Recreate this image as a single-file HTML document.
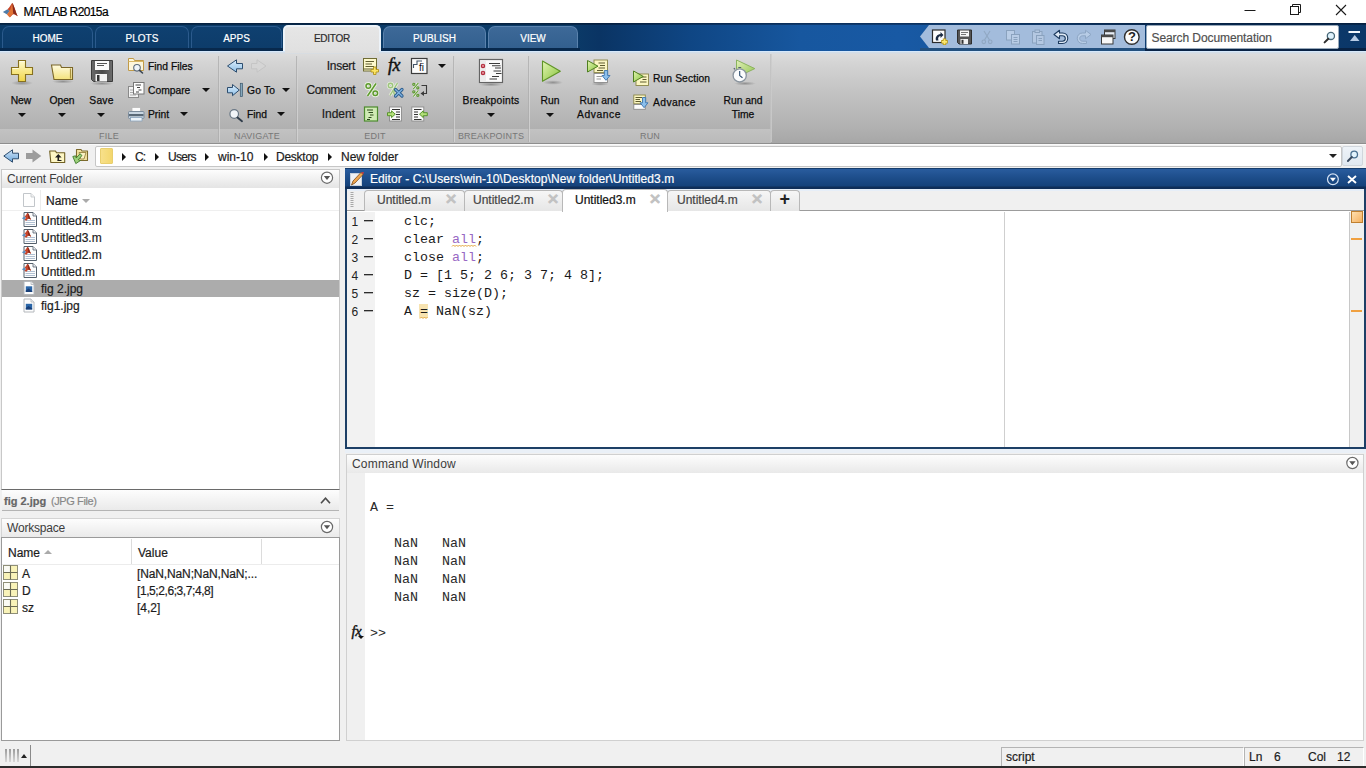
<!DOCTYPE html>
<html lang="en">
<head>
<meta charset="utf-8">
<title>MATLAB R2015a</title>
<style>
*{box-sizing:border-box;margin:0;padding:0}
html,body{width:1366px;height:768px;overflow:hidden;background:#f0f0f0;font-family:"Liberation Sans",sans-serif;color:#1a1a1a}
.abs,.abs *{position:absolute}
#app{position:relative;width:1366px;height:768px;overflow:hidden}
#app div,#app span,#app svg{position:absolute;white-space:nowrap}
.ui{font-size:12px;line-height:16px;color:#1c1c1c;-webkit-text-stroke:.2px}
.rb{font-size:10.3px;line-height:14px;color:#0c0c0c;-webkit-text-stroke:.25px #0c0c0c}
#app .mono{font-family:"Liberation Mono",monospace;font-size:13.333px;line-height:18px;white-space:pre;color:#1a1a1a}
.sec{font-size:9px;line-height:10px;color:#777;letter-spacing:.2px}
.tabt{font-size:11px;line-height:14px;color:#fff;text-align:center;-webkit-text-stroke:.2px #fff}
.tb{height:22px;background:linear-gradient(180deg,#0f4070,#0d3c6a);border:1px solid #2b5a8c;border-bottom:none;border-radius:7px 7px 0 0}
.tb.lt{background:linear-gradient(180deg,#3d6998,#33608f);border-color:#5a82ad}
.tb.act{background:linear-gradient(180deg,#e6e6e6,#e0e0e0);border:2px solid #edf3f9;border-bottom:none;border-radius:5px 5px 0 0}
#app .tb .tabt{left:0;right:0;top:5px;font-size:10px}
.c{text-align:center}.r{text-align:right}
.vsep{top:56px;width:2px;height:86px;background:linear-gradient(90deg,#acacac 0,#acacac 50%,#d6d6d6 50%,#d6d6d6 100%);opacity:.75}
.rtri{width:0;height:0;border-top:4px solid transparent;border-bottom:4px solid transparent;border-left:4px solid #111}
.utri{width:0;height:0;border-left:4px solid transparent;border-right:4px solid transparent;border-bottom:4px solid #aaa}
.etab{top:190px;height:21px;background:linear-gradient(180deg,#f6f6f6,#e6e6e6);border:1px solid #b8b8b8;border-bottom:none;border-radius:4px 4px 0 0}
.etab.on{top:189px;height:23px;background:#fff}
.x{top:189px;font-size:19px;line-height:20px;color:#c2c2c2;-webkit-text-stroke:1.1px #c2c2c2}
.dash{left:364px;width:9px;height:2px;background:linear-gradient(180deg,#2c2c2c 0,#2c2c2c 50%,#b0b0b0 50%,#b0b0b0 100%)}
.s{color:#9868c4}
.tri{width:0;height:0;border-left:4px solid transparent;border-right:4px solid transparent;border-top:4px solid #111}
</style>
</head>
<body>
<div id="app">

<!-- ===== TITLE BAR ===== -->
<div id="titlebar" style="left:0;top:0;width:1366px;height:23px;background:#fff"></div>
<span class="ui" style="left:23.500px;top:4px;color:#000;letter-spacing:-.62px">MATLAB R2015a</span>
<svg style="left:1.500px;top:.7px" width="17" height="19.200" viewBox="0 0 20 20" preserveAspectRatio="none">
 <path d="M1 11.5 L6.5 8.5 L9 10.5 L6 14 Z" fill="#4f7ca8"/>
 <path d="M6.5 8.5 C9 7 10.5 3 12 2 C13.5 2.5 15.5 10 18.5 16 C15.5 14 13.5 12.8 12 14.5 C10.5 16 9.5 17 9 17 L6 14 L9 10.5 Z" fill="#c8472a"/>
 <path d="M12 2 C13.5 2.5 15.5 10 18.5 16 C16 14 14.5 13 13.2 13.4 C12.8 9 12.5 5 12 2 Z" fill="#8a2a1a"/>
 <path d="M9 10.5 C10.5 8 11.2 4 12 2 C12.4 6 12.8 10 13.2 13.4 C12.2 13.8 11 15.5 9 17 L6 14 Z" fill="#e8813a" opacity=".75"/>
</svg>
<!-- window controls -->
<svg style="left:1240px;top:0" width="120" height="22" viewBox="1240 0 120 22" fill="none" stroke="#1a1a1a" stroke-width="1">
<path d="M1244.500 10.500 H1255.500"/>
<rect x="1290.500" y="6.500" width="8" height="8"/><path d="M1292.500 6.500 V4.500 H1300.500 V12.500 H1298.500"/>
<path d="M1336 5 L1346 15 M1346 5 L1336 15" stroke-width="1.100"/>
</svg>

<!-- ===== TAB STRIP ===== -->
<div id="tabstrip" style="left:0;top:23px;width:1366px;height:28px;background:linear-gradient(90deg,#0b3b68 0,#0b3b68 570px,#0a3464 600px,#0f4684 690px,#17579f 800px,#1859a4 900px,#175496 1050px,#0d3c70 1150px,#0b3768 1366px)"></div>

<div style="left:0;top:23px;width:1366px;height:2px;background:linear-gradient(180deg,rgba(0,8,24,.55),rgba(0,8,24,.3))"></div><div style="left:0;top:48px;width:580px;height:3px;background:rgba(6,24,50,.5)"></div><div style="left:1145px;top:48px;width:221px;height:3px;background:rgba(6,20,44,.6)"></div><div style="left:920px;top:48px;width:225px;height:3px;background:#23507e"></div>
<div class="tb" style="left:2px;top:26px;width:91px"><span class="tabt">HOME</span></div>
<div class="tb" style="left:95px;top:26px;width:94px"><span class="tabt">PLOTS</span></div>
<div class="tb" style="left:191px;top:26px;width:91px"><span class="tabt">APPS</span></div>
<div class="tb lt" style="left:383px;top:26px;width:103px"><span class="tabt">PUBLISH</span></div>
<div class="tb lt" style="left:488px;top:26px;width:90px"><span class="tabt">VIEW</span></div>
<div class="tb act" style="left:283px;top:25px;width:98px;height:27px"><span class="tabt" style="color:#2c2c2c;top:5px;letter-spacing:-.25px;-webkit-text-stroke:.2px #2c2c2c">EDITOR</span></div>
<!-- quick access -->
<div id="qa" style="left:920px;top:25px;width:225px;height:23px;background:#a3bcdc;clip-path:polygon(9px 0,100% 0,100% 100%,9px 100%,0 50%)"></div>
<div id="search" style="left:1146px;top:25px;width:193px;height:24px;background:#fff;border:1px solid #9ab;border-radius:2px"></div>
<span class="ui" style="left:1151.500px;top:30px;color:#505050;letter-spacing:-.08px">Search Documentation</span>

<svg style="left:920px;top:23px" width="446" height="28" viewBox="920 23 446 28">
<!-- new shortcut -->
<rect x="932.500" y="30" width="12.500" height="12.500" fill="#fdfdfd" stroke="#2a2a2a" stroke-width="1.200"/>
<path d="M936 40.500 C935 37 937 34.500 940.500 34 V32 L943.500 35 L940.500 38 V36 C938.500 36.300 937.500 38 938.500 40.500 Z" fill="#1c2c44"/>
<path d="M944.500 38.500 V45 M941.200 41.800 H947.800" stroke="#b89a1c" stroke-width="3.400"/><path d="M944.500 39.300 V44.200 M942 41.800 H947" stroke="#fbe870" stroke-width="1.800"/>
<!-- save -->
<path d="M957.500 30 H971.500 V44 H959 L957.500 42.500 Z" fill="#555" stroke="#2e2e2e" stroke-width="1"/>
<rect x="960" y="30.500" width="9" height="6" fill="#f6f6f6"/><path d="M961 32.500 H968 M961 34.500 H966" stroke="#666" stroke-width=".9"/>
<rect x="960.500" y="39" width="7.500" height="5" fill="#f0f0f0"/><rect x="961.500" y="39.800" width="2" height="4" fill="#333"/>
<!-- cut (disabled) -->
<g stroke="#8fa6c0" fill="none" stroke-width="1.100" opacity=".9"><path d="M984 31 L989.500 40 M990 31 L984.500 40"/><circle cx="983.800" cy="41.800" r="1.800"/><circle cx="990.200" cy="41.800" r="1.800"/></g>
<!-- copy (disabled) -->
<g stroke="#8aa2be" fill="#b9cde6" stroke-width="1"><rect x="1006.500" y="30.500" width="8" height="9.500"/><rect x="1011.500" y="34.500" width="8" height="9.500"/><path d="M1013.500 37.500 H1017.500 M1013.500 39.500 H1017.500 M1013.500 41.500 H1017.500" fill="none"/></g>
<!-- paste (disabled) -->
<g stroke="#8aa2be" fill="#b4c8e2" stroke-width="1"><rect x="1032.500" y="31.500" width="9.500" height="11.500"/><rect x="1035" y="30" width="4.500" height="2.500"/><rect x="1036.500" y="35.500" width="7.500" height="9"/><path d="M1038.500 38.500 H1042 M1038.500 40.500 H1042" fill="none"/></g>
<!-- undo -->
<path d="M1054 34.500 L1059.500 30.300 V33 H1062.500 C1069.500 33 1069.500 43.500 1062.500 43.500 H1058.500 V41.200 H1062.300 C1066.300 41.200 1066.300 35.800 1062.300 35.800 H1059.500 V38.700 Z" fill="#dfeaf6" stroke="#1c3a5e" stroke-width="1.100" stroke-linejoin="round"/>
<!-- redo (disabled) -->
<path d="M1091 34.500 L1085.500 30.300 V33 H1082.500 C1075.500 33 1075.500 43.500 1082.500 43.500 H1086.500 V41.200 H1082.700 C1078.700 41.200 1078.700 35.800 1082.700 35.800 H1085.500 V38.700 Z" fill="#b7cce6" stroke="#8da6c4" stroke-width="1" stroke-linejoin="round"/>
<!-- windows -->
<rect x="1104.500" y="30" width="10.500" height="8.500" fill="#e8eef6" stroke="#3a3a3a" stroke-width="1"/><rect x="1104.500" y="30" width="10.500" height="2.200" fill="#4a4a4a"/>
<rect x="1101.500" y="35" width="11.500" height="9" fill="#f8f8f8" stroke="#3a3a3a" stroke-width="1"/><rect x="1101.500" y="35" width="11.500" height="2.200" fill="#4a4a4a"/>
<!-- help -->
<circle cx="1131.800" cy="37" r="7.300" fill="#fbfbfb" stroke="#2e2e2e" stroke-width="1.400"/>
<!-- search magnifier -->
<circle cx="1330.900" cy="35.900" r="3.600" fill="#dff2fc" stroke="#486878" stroke-width="1.300"/>
<path d="M1328.300 38.700 L1324.600 42.400" stroke="#2e2e2e" stroke-width="2" stroke-linecap="round"/>
<!-- collapse -->
<rect x="1348.500" y="31" width="11.500" height="2" fill="#f4f8fc"/>
<path d="M1350 41 L1354.700 35 L1359.500 41 Z" fill="#b7cbe4"/>
</svg>
<span style="left:1128px;top:30px;font-size:13px;line-height:14px;font-weight:bold;color:#1e1e1e">?</span>
<!-- ===== RIBBON ===== -->
<div id="ribbon" style="left:0;top:51px;width:1366px;height:93px;background:linear-gradient(180deg,#d6e8fa 0,#d6e8fa 1px,#d3dde7 1px,#d3dde7 2px,#dcdcdc 3px,#d4d4d4 12px,#c0c0c0 46px,#b0b0b0 78px,#a7a7a7 92px,#8e8e8e 92px)"></div>

<div style="left:285px;top:51px;width:94px;height:2px;background:#dfdfdf"></div>
<div style="left:0;top:129px;width:771px;height:14px;background:linear-gradient(180deg,#c2c2c2,#bababa)"></div>

<div class="vsep" style="left:218px"></div><div class="vsep" style="left:296px"></div><div class="vsep" style="left:453px"></div><div class="vsep" style="left:528px"></div><div class="vsep" style="left:770px;top:54px;height:88px;background:linear-gradient(90deg,#bcbcbc,#d0d0d0);opacity:.8"></div>
<svg id="ribicons" style="left:0;top:51px" width="772" height="93" viewBox="0 51 772 93">
<defs>
<linearGradient id="gy" x1="0" y1="0" x2="0" y2="1"><stop offset="0" stop-color="#fffbd0"/><stop offset="1" stop-color="#f1d545"/></linearGradient>
<linearGradient id="gf" x1="0" y1="0" x2="0" y2="1"><stop offset="0" stop-color="#fffbe0"/><stop offset="1" stop-color="#f3e27c"/></linearGradient>
<linearGradient id="gg" x1="0" y1="0" x2="1" y2="1"><stop offset="0" stop-color="#e4f5b4"/><stop offset="1" stop-color="#86c33a"/></linearGradient>
<linearGradient id="gb" x1="0" y1="0" x2="0" y2="1"><stop offset="0" stop-color="#dceefc"/><stop offset="1" stop-color="#8fc0e8"/></linearGradient>
<linearGradient id="gd" x1="0" y1="0" x2="1" y2="0"><stop offset="0" stop-color="#6a6a6a"/><stop offset=".5" stop-color="#4a4a4a"/><stop offset="1" stop-color="#6e6e6e"/></linearGradient>
<radialGradient id="gsh"><stop offset="0" stop-color="#000" stop-opacity=".28"/><stop offset="1" stop-color="#000" stop-opacity="0"/></radialGradient>
</defs>
<!-- New -->
<ellipse cx="22" cy="83" rx="11" ry="2.5" fill="url(#gsh)"/>
<path d="M18.5 60.5 H25.5 V67.5 H32.5 V74.5 H25.5 V81.5 H18.5 V74.5 H11.5 V67.5 H18.5 Z" fill="url(#gy)" stroke="#86701f" stroke-width="1.100"/>
<path d="M19.5 61.5 H24.5 M12.5 68.5 H18.5" stroke="#fffef0" stroke-width="1" opacity=".8"/>
<!-- Open -->
<ellipse cx="63" cy="81.5" rx="11" ry="2" fill="url(#gsh)"/>
<path d="M51.5 65 H60.5 L61.5 67.5 H72.5 V79.5 H54 Z" fill="url(#gf)" stroke="#7a6628" stroke-width="1.100"/>
<path d="M70.5 68.5 V78.5" stroke="#a8913e" stroke-width="1.2"/>
<!-- Save -->
<ellipse cx="102" cy="83.5" rx="12" ry="2" fill="url(#gsh)"/>
<path d="M91.5 60.5 H112.5 V81.5 H93.5 L91.5 79.5 Z" fill="url(#gd)" stroke="#3c3c3c" stroke-width="1"/>
<rect x="95" y="61" width="14" height="9" fill="#fbfbfb"/>
<path d="M97 63.5 H107 M97 65.5 H104" stroke="#555" stroke-width="1"/>
<rect x="95.500" y="74" width="11.500" height="7.500" fill="#f4f4f4"/>
<rect x="97" y="75" width="2.500" height="6" fill="#333"/>
<!-- Find files -->
<path d="M128.500 58.500 H133.500 L134.500 60.500 H143.500 V70.500 H128.500 Z" fill="#fdf6dc" stroke="#c09a48" stroke-width="1"/>
<path d="M128.500 61.500 H143.500" stroke="#d8b866" stroke-width="1"/>
<circle cx="137" cy="67.800" r="3.300" fill="#eef4fa" stroke="#5c6b7c" stroke-width="1.100"/>
<path d="M139.500 70.300 L142.500 73" stroke="#3a4654" stroke-width="1.600" stroke-linecap="round"/>
<!-- Compare -->
<rect x="128.500" y="86.500" width="10" height="11" fill="#f2f2f2" stroke="#8a8a8a"/>
<path d="M130 90 H133 M130 92.500 H133 M130 95 H136" stroke="#aaa" stroke-width="1"/>
<rect x="133.500" y="82.500" width="10.500" height="11.500" fill="#fdfdfd" stroke="#777"/>
<path d="M135.500 85 H141 M137 87.500 H140 M138.500 90 H141.500 M136 92 H139" stroke="#444" stroke-width="1"/>
<!-- Print -->
<rect x="132" y="107.500" width="8.500" height="5" fill="#fcfcfc" stroke="#b8b8b8" stroke-width=".8"/>
<rect x="128.500" y="111.500" width="15.500" height="7" rx="1" fill="#c9d6e2" stroke="#7c8c9c"/>
<rect x="129" y="114" width="14.500" height="2.200" fill="#5b6a78"/>
<rect x="130.500" y="117.500" width="11.500" height="3.500" fill="#eef5fb" stroke="#8aa4bc" stroke-width=".8"/>
<!-- Back / Forward -->
<path d="M227.500 66 L236.500 59.800 V63.500 H242.500 V68.800 H236.500 V72.200 Z" fill="url(#gb)" stroke="#2d4d6e" stroke-width="1" stroke-linejoin="round"/>
<path d="M266 66 L257 59.800 V63.500 H251.500 V68.800 H257 V72.200 Z" fill="#d6d6d6" stroke="#c2c2c2" stroke-width="1" stroke-linejoin="round" opacity=".8"/>
<!-- Go To -->
<path d="M239.300 90 L232.500 84.500 V87.500 H227.500 V92.800 H232.500 V95.700 Z" fill="url(#gb)" stroke="#2d4d6e" stroke-width="1" stroke-linejoin="round"/>
<rect x="240.300" y="83.300" width="2.200" height="13.200" fill="#86a8bd" stroke="#3a566c" stroke-width=".7"/>
<!-- Find -->
<circle cx="234.200" cy="114" r="4.300" fill="#f2f5f8" stroke="#6a7886" stroke-width="1.200"/>
<path d="M237.500 117.500 L242 121.200" stroke="#2f3c4a" stroke-width="1.900" stroke-linecap="round"/>
<!-- Insert section -->
<rect x="363.500" y="58.500" width="13" height="12.500" fill="#fdf9cc" stroke="#6f6c34"/>
<path d="M365.500 61.500 H374 M365.500 64 H372 M365.500 66.500 H374 M363.500 69 H377" stroke="#5e5b2e" stroke-width="1"/>
<path d="M373.500 67 H376 V69.500 H378.500 V72 H376 V74.500 H373.500 V72 H371 V69.500 H373.500 Z" fill="#fbe566" stroke="#b2941c" stroke-width=".9"/>
<!-- fi icon -->
<rect x="411.500" y="58.500" width="15.500" height="15" fill="#fcfcfc" stroke="#3c3c3c" stroke-width="1.200"/>
<path d="M413.500 68 V64.500 H417 V61 H422" fill="none" stroke="#44566a" stroke-width="1.100"/>
<!-- % comment -->
<g fill="none" stroke="#f2fae8" stroke-width="3.200" opacity=".85"><circle cx="368.300" cy="86" r="2.300"/><circle cx="375.300" cy="93.300" r="2.300"/><path d="M376 83.500 L367.500 96"/></g>
<g fill="none" stroke="#5c9a2c" stroke-width="1.500"><circle cx="368.300" cy="86" r="2.300"/><circle cx="375.300" cy="93.300" r="2.300"/><path d="M376 83.500 L367.500 96"/></g>
<!-- % uncomment -->
<g fill="none" stroke="#eef7e2" stroke-width="3" opacity=".8"><circle cx="390.500" cy="85.500" r="2.200"/><circle cx="396" cy="92.500" r="2.200"/><path d="M397.500 83 L390 95.500"/></g>
<g fill="none" stroke="#9cc47c" stroke-width="1.400"><circle cx="390.500" cy="85.500" r="2.200"/><circle cx="396" cy="92.500" r="2.200"/><path d="M397.500 83 L390 95.500"/></g>
<path d="M395.500 89.500 L402 96 M402 89.500 L395.500 96" stroke="#2c5c8c" stroke-width="3.200" stroke-linecap="round"/>
<path d="M395.500 89.500 L402 96 M402 89.500 L395.500 96" stroke="#7fb2e0" stroke-width="1.400" stroke-linecap="round"/>
<!-- %% wrap -->
<g fill="none" stroke="#eef7e2" stroke-width="2.600" opacity=".8"><path d="M418 83 L413.500 89 M418 90.500 L413.500 96.500"/></g>
<g fill="none" stroke="#5c9a2c" stroke-width="1.100"><circle cx="413.800" cy="84.300" r="1.100"/><circle cx="417.800" cy="87.800" r="1.100"/><path d="M418.300 83 L413.300 89"/><circle cx="413.800" cy="91.800" r="1.100"/><circle cx="417.800" cy="95.300" r="1.100"/><path d="M418.300 90.500 L413.300 96.500"/></g>
<path d="M421.500 85.500 H426.500 V93.500 H422" fill="none" stroke="#3a3a3a" stroke-width="1.100"/>
<path d="M420.500 93.500 L424 91 V96 Z" fill="#3a3a3a"/>
<!-- smart indent -->
<rect x="364.500" y="107" width="13" height="14" fill="#cfeab4" stroke="#4c8a2e" stroke-width="1.200"/>
<path d="M367 110 H373 M368.500 112.500 H373 M370 115 H373.500 M368.500 117.500 H371.500 M367 119.500 H370" stroke="#2c4a1c" stroke-width="1"/>
<!-- indent more -->
<rect x="389.500" y="107" width="12" height="14" fill="#fafafa" stroke="#8c8c8c" stroke-width=".9"/>
<path d="M392 109.500 H400 M396 112 H400 M396 114.500 H400 M396 117 H400 M392 119.500 H400" stroke="#333" stroke-width="1.100"/>
<path d="M387.500 112.700 H391.500 V110.800 L395.300 114.200 L391.500 117.600 V115.700 H387.500 Z" fill="#b4e07a" stroke="#4f8f22" stroke-width=".9" stroke-linejoin="round"/>
<!-- indent less -->
<rect x="411.800" y="107" width="12" height="14" fill="#fafafa" stroke="#8c8c8c" stroke-width=".9"/>
<path d="M414 109.500 H421.500 M414 112 H418 M414 114.500 H418 M414 117 H418 M414 119.500 H421.500" stroke="#333" stroke-width="1.100"/>
<path d="M427.300 112.700 H423.300 V110.800 L419.500 114.200 L423.300 117.600 V115.700 H427.300 Z" fill="#b4e07a" stroke="#4f8f22" stroke-width=".9" stroke-linejoin="round"/>
<!-- Breakpoints -->
<ellipse cx="491" cy="84.500" rx="12" ry="2" fill="url(#gsh)"/>
<rect x="479.500" y="59.500" width="23" height="23" fill="#fbfbfb" stroke="#646464" stroke-width="1.200"/>
<rect x="480.200" y="60.200" width="5.800" height="21.600" fill="#ececec"/>
<circle cx="483" cy="65.900" r="1.700" fill="#e48a94" stroke="#b02c3c" stroke-width="1.100"/>
<circle cx="483" cy="72.900" r="1.700" fill="#e48a94" stroke="#b02c3c" stroke-width="1.100"/>
<path d="M489 63.500 H500 M492 65.800 H500.500 M495 68 H501 M493.500 71 H501 M496 73.500 H501.500 M492 76.500 H499 M489.500 79 H497" stroke="#3c3c3c" stroke-width="1.100"/>
<!-- Run -->
<ellipse cx="553" cy="82.500" rx="10" ry="2.300" fill="url(#gsh)"/>
<path d="M542.500 61 V81.300 L560.300 71.200 Z" fill="url(#gg)" stroke="#5f9426" stroke-width="1.100" stroke-linejoin="round"/>
<!-- Run and advance -->
<ellipse cx="600" cy="84" rx="9" ry="1.800" fill="url(#gsh)"/>
<rect x="594" y="60" width="13.500" height="12.500" fill="#fbf6c2" stroke="#8a8648" stroke-width=".9"/>
<path d="M598.500 63 H605 M600 65.500 H605 M598.500 68 H605 M597 70.500 H603" stroke="#5e5b2e" stroke-width="1"/>
<rect x="594" y="73.500" width="13.500" height="9" fill="#fcfcfc" stroke="#8a8a8a" stroke-width=".9"/>
<path d="M596.500 76.500 H602 M596.500 79 H601" stroke="#999" stroke-width="1"/>
<path d="M587.500 60.500 V72 L598 66.200 Z" fill="url(#gg)" stroke="#4e7e20" stroke-width="1" stroke-linejoin="round"/>
<path d="M604.300 70.500 H607.700 V75.500 H610 L606 80.300 L602 75.500 H604.300 Z" fill="#8cc0ec" stroke="#3a74b0" stroke-width=".9" stroke-linejoin="round"/>
<!-- Run section -->
<rect x="636" y="74" width="12.500" height="11.500" fill="#fbf6c2" stroke="#8a8648" stroke-width=".9"/>
<path d="M641 77 H646.500 M642.500 79.500 H646.500 M640 82 H646.500" stroke="#5e5b2e" stroke-width="1"/>
<path d="M633.500 71 V82 L643.300 76.400 Z" fill="url(#gg)" stroke="#4e7e20" stroke-width="1" stroke-linejoin="round"/>
<!-- Advance -->
<rect x="633.800" y="95" width="11.500" height="8.800" fill="#fbf6c2" stroke="#8a8648" stroke-width=".9"/>
<path d="M635.500 97.500 H642 M635.500 99.500 H640 M635.500 101.500 H641" stroke="#5e5b2e" stroke-width="1"/>
<rect x="633.800" y="104.500" width="11.500" height="4.800" fill="#fcfcfc" stroke="#8a8a8a" stroke-width=".9"/>
<path d="M642.500 97.500 H645.700 V102.800 H648 L644.100 107.700 L640.200 102.800 H642.500 Z" fill="#8cc0ec" stroke="#3a74b0" stroke-width=".9" stroke-linejoin="round"/>
<!-- Run and time -->
<ellipse cx="745" cy="83.500" rx="11" ry="2" fill="url(#gsh)"/>
<path d="M736.500 60 V77.300 L754.800 68.600 Z" fill="url(#gg)" stroke="#7fae4a" stroke-width="1" stroke-linejoin="round" opacity=".85"/>
<circle cx="739.700" cy="75.400" r="6.600" fill="#fbfcfd" stroke="#8a949e" stroke-width="1.300"/>
<path d="M739.700 71 V75.600 L742.500 77.800" fill="none" stroke="#2a4a6c" stroke-width="1.100"/>
<path d="M738.300 67.500 H741.200 M735 69.300 L733.800 68.200" stroke="#55606a" stroke-width="1.200"/>
</svg>
<span style="left:388px;top:56px;font-family:'Liberation Serif',serif;font-style:italic;font-size:18px;line-height:18px;color:#111;letter-spacing:-.6px;-webkit-text-stroke:.45px #111">fx</span>
<span style="left:419px;top:63px;font-size:10px;line-height:10px;color:#111">fi</span>
<!-- big button labels -->
<span class="rb c" style="left:-9px;top:94px;width:60px">New</span><div class="tri" style="left:18px;top:113px"></div>
<span class="rb c" style="left:32px;top:94px;width:60px">Open</span><div class="tri" style="left:58px;top:113px"></div>
<span class="rb c" style="left:71.500px;top:94px;width:60px;letter-spacing:.2px">Save</span><div class="tri" style="left:97px;top:113px"></div>
<span class="rb" style="left:148px;top:60px">Find Files</span>
<span class="rb" style="left:148px;top:84px">Compare</span><div class="tri" style="left:202px;top:88px"></div>
<span class="rb" style="left:148px;top:108px">Print</span><div class="tri" style="left:180px;top:112px"></div>
<span class="sec c" style="left:79px;top:131px;width:60px">FILE</span>
<span class="rb" style="left:247px;top:84px;letter-spacing:.2px">Go To</span><div class="tri" style="left:282px;top:88px"></div>
<span class="rb" style="left:247px;top:108px">Find</span><div class="tri" style="left:277px;top:112px"></div>
<span class="sec c" style="left:227px;top:131px;width:60px">NAVIGATE</span>
<span class="ui r" style="left:295px;top:58px;width:60px;letter-spacing:-.3px">Insert</span>
<span class="ui r" style="left:295px;top:82px;width:60px;letter-spacing:-.5px">Comment</span>
<span class="ui r" style="left:295px;top:106px;width:60px">Indent</span>
<div class="tri" style="left:438px;top:64px"></div>
<span class="sec c" style="left:345px;top:131px;width:60px">EDIT</span>
<span class="rb c" style="left:461px;top:94px;width:60px;letter-spacing:.22px">Breakpoints</span><div class="tri" style="left:487px;top:113px"></div>
<span class="sec c" style="left:451px;top:131px;width:80px">BREAKPOINTS</span>
<span class="rb c" style="left:520px;top:94px;width:60px">Run</span><div class="tri" style="left:546px;top:113px"></div>
<span class="rb c" style="left:569px;top:94px;width:60px">Run and</span><span class="rb c" style="left:569px;top:108px;width:60px;letter-spacing:.55px">Advance</span>
<span class="rb" style="left:653px;top:72px;letter-spacing:.1px">Run Section</span>
<span class="rb" style="left:653px;top:96px;letter-spacing:.4px">Advance</span>
<span class="rb c" style="left:713px;top:94px;width:60px">Run and</span><span class="rb c" style="left:713px;top:108px;width:60px">Time</span>
<span class="sec c" style="left:620px;top:131px;width:60px">RUN</span>

<!-- ===== ADDRESS BAR ===== -->
<div id="addr" style="left:0;top:144px;width:1366px;height:25px;background:#f0f0f0"></div>

<div style="left:0;top:144px;width:1366px;height:1px;background:#fafafa"></div>
<div id="addrf" style="left:95px;top:146px;width:1247px;height:21px;background:#fff;border:1px solid #c6c6c6;border-radius:2px"></div>
<div style="left:100px;top:148px;width:13px;height:16px;background:linear-gradient(90deg,#f7e08a,#f3d76e);border:1px solid #e9cf6e;border-radius:1px"></div>
<div class="rtri" style="left:122px;top:153px"></div><span class="ui" style="left:135px;top:149px;letter-spacing:-.9px">C:</span>
<div class="rtri" style="left:155px;top:153px"></div><span class="ui" style="left:168px;top:149px;letter-spacing:-.7px">Users</span>
<div class="rtri" style="left:205px;top:153px"></div><span class="ui" style="left:218px;top:149px">win-10</span>
<div class="rtri" style="left:264px;top:153px"></div><span class="ui" style="left:276px;top:149px;letter-spacing:-.25px">Desktop</span>
<div class="rtri" style="left:328px;top:153px"></div><span class="ui" style="left:341px;top:149px">New folder</span>
<div class="tri" style="left:1329px;top:154px;border-top-color:#222"></div>
<div style="left:1342px;top:146px;width:21px;height:20px;background:linear-gradient(180deg,#eef3f8,#e0e8f0);border:1px solid #d0d6dc;border-radius:2px"></div>

<svg style="left:0;top:144px" width="1366" height="25" viewBox="0 144 1366 25">
<defs><linearGradient id="gb2" x1="0" y1="0" x2="0" y2="1"><stop offset="0" stop-color="#cfe4f8"/><stop offset="1" stop-color="#6ea8dc"/></linearGradient></defs>
<path d="M3.800 156 L12.500 149.800 V153.200 H18.500 V158.800 H12.500 V162.200 Z" fill="url(#gb2)" stroke="#2d4d6e" stroke-width="1" stroke-linejoin="round"/>
<path d="M41.300 156 L32.500 149.600 V153 H26 V159 H32.500 V162.400 Z" fill="#9c9c9c"/>
<path d="M49.700 151 H55.500 L56.500 152.800 H64.700 V162.500 H50.800 Z" fill="#fdf6c4" stroke="#6f5f22" stroke-width="1.100" stroke-linejoin="round"/>
<path d="M57.500 160.500 V157.500 H55 L58.300 154 L61.600 157.500 H59.100 V160.500 Z" fill="#1e1e1e"/>
<path d="M61.500 160.500 H57.500" stroke="#1e1e1e" stroke-width="1"/>
<path d="M76.500 149.500 H81 L82 151 H87.500 V160.500 H76.500 Z" fill="#f3e3a0" stroke="#7c6a2c" stroke-width="1.100" stroke-linejoin="round"/>
<path d="M79 152.500 L86 152.500 L84 159 H80.500 Z" fill="#fbf2c4" stroke="#8a7632" stroke-width=".8"/>
<path d="M72.800 156.500 L75.500 155.800 L76.200 158 L80 153.800 L82 155.500 L78.300 159.700 L80.500 160.500 L75.800 163.600 Z" fill="#9cd07a" stroke="#3e7a2a" stroke-width=".9" stroke-linejoin="round"/>
<!-- address search button icon -->
<circle cx="1354.200" cy="154.500" r="3.300" fill="#e3f3fc" stroke="#4a7090" stroke-width="1.300"/>
<path d="M1351.800 157 L1347.900 161" stroke="#3a4a5e" stroke-width="1.900" stroke-linecap="round"/>
</svg>
<!-- ===== LEFT: CURRENT FOLDER ===== -->
<div id="cf" style="left:0;top:169px;width:345px;height:345px;background:#f0f0f0"></div>

<div style="left:1px;top:169px;width:339px;height:321px;background:#fff;border:1px solid #c8c8c8;border-bottom-color:#6a6a6a"></div>
<div style="left:2px;top:170px;width:337px;height:18px;background:linear-gradient(180deg,#fdfdfd,#e4e4e4)"></div>
<span class="ui" style="left:7px;top:171px;color:#3c3c3c;-webkit-text-stroke:0;letter-spacing:-.15px">Current Folder</span>
<div style="left:2px;top:188px;width:337px;height:23px;background:#fff;border-bottom:1px solid #efefef"></div>
<div style="left:40px;top:190px;width:1px;height:20px;background:#ececec"></div>
<span class="ui" style="left:46px;top:193px">Name</span>
<div class="tri" style="left:82px;top:199px;border-top-color:#aaa"></div>
<div style="left:2px;top:280px;width:337px;height:17px;background:#acacac"></div>
<span class="ui" style="left:41px;top:213px">Untitled4.m</span>
<span class="ui" style="left:41px;top:230px">Untitled3.m</span>
<span class="ui" style="left:41px;top:247px">Untitled2.m</span>
<span class="ui" style="left:41px;top:264px">Untitled.m</span>
<span class="ui" style="left:41px;top:281px">fig 2.jpg</span>
<span class="ui" style="left:41px;top:298px">fig1.jpg</span>
<svg style="left:0;top:169px" width="345" height="345" viewBox="0 169 345 345">
<defs>
<g id="mf"><path d="M2.500 .5 H11.500 L15 4 V14.500 H2.500 Z" fill="#fdfdfd" stroke="#55606c" stroke-width="1"/><path d="M11.500 .5 V4 H15" fill="#e8ecf0" stroke="#55606c" stroke-width=".8"/>
<path d="M4 8.500 H13.500 M4 10.500 H13.500 M4 12.500 H13.500" stroke="#9db0c6" stroke-width=".8"/>
<path d="M.3 6.300 L3.200 4.600 L4.600 5.800 L3 7.800 Z" fill="#5a8fc0"/><path d="M3.200 4.600 C4.600 3.600 5.200 1.400 6.100 .8 C7.200 1.400 8 4.800 9.600 7.800 C8 6.800 7 6.400 6.200 7.200 C5.400 8 5 8.600 4.600 8.800 L3 7.800 L4.600 5.800 Z" fill="#c8442a"/><path d="M6.100 .8 C7.200 1.400 8 4.800 9.600 7.800 C8.300 6.900 7.400 6.600 6.800 6.800 Z" fill="#8a2a1a"/></g>
<g id="jf"><path d="M.5 .5 H7.500 L10.500 3.500 V13.500 H.5 Z" fill="#fdfdfd" stroke="#b4b8bc" stroke-width="1"/><path d="M7.500 .5 V3.500 H10.500" fill="#f0f0f0" stroke="#b4b8bc" stroke-width=".8"/><rect x="2.300" y="5.300" width="6.400" height="5.600" fill="#2a66a8"/><path d="M2.300 9.500 L5 7.500 L8.700 10 V10.900 H2.300 Z" fill="#183f78"/></g>
</defs>
<path d="M23.500 193.500 H31 L34.500 197 V206.500 H23.500 Z" fill="#fefefe" stroke="#c2c6ca" stroke-width="1"/><path d="M31 193.500 V197 H34.500" fill="#f2f2f2" stroke="#c2c6ca" stroke-width=".8"/>
<use href="#mf" x="21.500" y="212"/><use href="#mf" x="21.500" y="229"/><use href="#mf" x="21.500" y="246"/><use href="#mf" x="21.500" y="263"/>
<use href="#jf" x="23.500" y="281"/><use href="#jf" x="23.500" y="298.500"/>
<!-- header circle dropdown -->
<circle cx="327" cy="177.700" r="5.600" fill="#fff" stroke="#6a6a6a" stroke-width="1.200"/><path d="M323.800 176 H330.200 L327 180 Z" fill="#555"/>
</svg>
<!-- details bar -->
<div style="left:2px;top:490px;width:337px;height:21px;background:linear-gradient(180deg,#fdfdfd,#eaeaea);border-bottom:1px solid #b4b4b4"></div>
<svg style="left:318px;top:494px" width="16" height="12" viewBox="318 494 16 12"><path d="M321 503.300 L325.500 498.300 L330 503.300" fill="none" stroke="#4c4c4c" stroke-width="1.600"/></svg>
<span class="ui" style="left:4px;top:493px;color:#666;font-weight:bold;font-size:11px">fig 2.jpg</span>
<span class="ui" style="left:51px;top:493px;color:#888;font-size:11px;letter-spacing:-.4px">(JPG File)</span>

<!-- ===== LEFT: WORKSPACE ===== -->
<div id="ws" style="left:0;top:514px;width:345px;height:230px;background:#f0f0f0"></div>

<div style="left:1px;top:518px;width:339px;height:20px;background:linear-gradient(180deg,#fdfdfd,#e9e9e9);border:1px solid #d4d4d4;border-bottom:none"></div>
<span class="ui" style="left:7px;top:520px;color:#3c3c3c;-webkit-text-stroke:0;letter-spacing:-.2px">Workspace</span>
<div style="left:1px;top:537px;width:339px;height:204px;background:#fff;border:1px solid #9a9a9a"></div>
<div style="left:2px;top:538px;width:337px;height:27px;background:#fff;border-bottom:1px solid #ececec"></div>
<div style="left:131px;top:539px;width:1px;height:25px;background:#dcdcdc"></div>
<div style="left:261px;top:539px;width:1px;height:25px;background:#dcdcdc"></div>
<span class="ui" style="left:8px;top:545px">Name</span>
<div class="utri" style="left:44px;top:550px"></div>
<span class="ui" style="left:138px;top:545px">Value</span>
<span class="ui" style="left:22px;top:566px">A</span><span class="ui" style="left:137px;top:566px;letter-spacing:-.13px">[NaN,NaN;NaN,NaN;...</span>
<span class="ui" style="left:22px;top:583px">D</span><span class="ui" style="left:137px;top:583px;letter-spacing:-.42px">[1,5;2,6;3,7;4,8]</span>
<span class="ui" style="left:22px;top:600px">sz</span><span class="ui" style="left:137px;top:600px">[4,2]</span>

<svg style="left:0;top:514px" width="345" height="230" viewBox="0 514 345 230">
<defs><g id="wg"><rect x=".5" y=".5" width="14" height="14" fill="#f9f3b8" stroke="#8f8f78" stroke-width="1"/><rect x="1" y="1" width="6.500" height="6.500" fill="#fbfbf4"/><path d="M7.500 .5 V14.500 M.5 7.500 H14.500" stroke="#6c6c54" stroke-width="1.100"/></g></defs>
<use href="#wg" x="3" y="565"/><use href="#wg" x="3" y="582"/><use href="#wg" x="3" y="599"/>
<circle cx="327" cy="527" r="5.600" fill="#fff" stroke="#6a6a6a" stroke-width="1.200"/><path d="M323.800 525.300 H330.200 L327 529.300 Z" fill="#555"/>
</svg>
<!-- ===== EDITOR ===== -->
<div id="ed" style="left:345px;top:169px;width:1021px;height:279px;background:#fff"></div>

<div style="left:345px;top:168px;width:1021px;height:281px;border:2px solid #1d3f66;border-top:none;background:#fff"></div>
<div style="left:345px;top:168px;width:1021px;height:21px;background:linear-gradient(180deg,#153c6c 0,#153c6c 1px,#295c9e 1px,#1d4d8a 10px,#15427a 18px,#0f2e58 19px,#0f2e58 21px)"></div>
<span class="ui" style="left:370px;top:171px;color:#fff;letter-spacing:.09px">Editor - C:\Users\win-10\Desktop\New folder\Untitled3.m</span>
<div style="left:347px;top:189px;width:1017px;height:22px;background:#f0f0f0;border-bottom:1px solid #9c9c9c;border-top:2px solid #e6eef8"></div>
<div class="etab" style="left:364px;width:101px"></div><span class="ui" style="left:377px;top:192px;color:#444">Untitled.m</span><span class="x" style="left:445.5px">×</span>
<div class="etab" style="left:464px;width:99px"></div><span class="ui" style="left:473px;top:192px;color:#444">Untitled2.m</span><span class="x" style="left:547.5px">×</span>
<div class="etab" style="left:667px;width:104px"></div><span class="ui" style="left:677px;top:192px;color:#444">Untitled4.m</span><span class="x" style="left:751.5px">×</span>
<div class="etab" style="left:770px;width:30px"></div><span style="left:779.500px;top:189px;font-size:18px;line-height:20px;color:#222;font-weight:bold">+</span>
<div class="etab on" style="left:562px;width:106px"></div><span class="ui" style="left:575px;top:192px;color:#111">Untitled3.m</span><span class="x" style="left:649.5px">×</span>
<div style="left:347px;top:212px;width:28px;height:235px;background:#f2f2f2"></div>
<div style="left:1004px;top:212px;width:1px;height:235px;background:#cfcfcf"></div>
<div style="left:1349px;top:212px;width:15px;height:235px;background:#f0f0f0;border-left:1px solid #c8c8c8"></div>
<div style="left:1351px;top:211px;width:12px;height:12px;background:linear-gradient(135deg,#ffe0b0,#f5b060);border:1px solid #c08030"></div>
<div style="left:1351px;top:238px;width:11px;height:2px;background:#f0a040"></div>
<div style="left:1351px;top:310px;width:11px;height:2px;background:#f0a040"></div>
<span class="mono" style="left:351.500px;top:213px;font-family:'Liberation Sans',sans-serif;font-size:12px;color:#222">1
2
3
4
5
6</span>
<div class="dash" style="top:220px"></div><div class="dash" style="top:238px"></div><div class="dash" style="top:256px"></div><div class="dash" style="top:274px"></div><div class="dash" style="top:292px"></div><div class="dash" style="top:310px"></div>
<div style="left:419px;top:304px;width:9px;height:14px;background:#f7e3b0"></div>
<svg style="left:400px;top:240px" width="90" height="82" viewBox="400 240 90 82" fill="none" stroke="#e3a53c" stroke-width="1"><path d="M452 246.500 l1.500 -1.500 l1.500 1.500 l1.500 -1.500 l1.500 1.500 l1.500 -1.500 l1.500 1.500 l1.500 -1.500 l1.500 1.500 l1.500 -1.500 l1.500 1.500 l1.500 -1.500 l1.500 1.500 l1.500 -1.500 l1.500 1.500 l1.500 -1.500 l1.500 1.500"/><path d="M420 318.500 l1.500 -1.500 l1.500 1.500 l1.500 -1.500 l1.500 1.500 l1.500 -1.500"/></svg>
<span class="mono" style="left:404px;top:213px">clc;
clear <span class="s" style="position:static">all</span>;
close <span class="s" style="position:static">all</span>;
D = [1 5; 2 6; 3 7; 4 8];
sz = size(D);
A = NaN(sz)</span>

<svg style="left:345px;top:168px" width="1021px" height="45" viewBox="345 168 1021 45">
<rect x="350.500" y="173.500" width="11" height="12" fill="#eef2f6" stroke="#c8d2dc" stroke-width="1"/>
<path d="M351.500 185 L353 181 L361 172.500 L363 174.500 L355 183 Z" fill="#f0a850" stroke="#7a4a1a" stroke-width=".8"/><path d="M361 172.500 L363 174.500 L364 172 Z" fill="#d83a3a"/>
<circle cx="1332.900" cy="179.300" r="5.400" fill="none" stroke="#d4e2f4" stroke-width="1.200"/><path d="M1329.900 177.700 H1335.900 L1332.900 181.500 Z" fill="#fff"/>
<path d="M1348 176 L1356 183 M1356 176 L1348 183" stroke="#fff" stroke-width="1.900"/>
<g stroke="#a8a8a8" stroke-width="1"><path d="M350.500 192.500 H353.500 M350.500 194.500 H353.500 M350.500 196.500 H353.500 M350.500 198.500 H353.500 M350.500 200.500 H353.500 M350.500 202.500 H353.500 M350.500 204.500 H353.500 M350.500 206.500 H353.500"/></g>
</svg>
<div style="left:345px;top:449px;width:1021px;height:4px;background:#eaf0f7"></div>
<!-- ===== COMMAND WINDOW ===== -->
<div id="cw" style="left:345px;top:453px;width:1021px;height:291px;background:#f0f0f0"></div>

<div style="left:346px;top:454px;width:1018px;height:287px;background:#fff;border:1px solid #d0d0d0"></div>
<div style="left:347px;top:455px;width:1016px;height:18px;background:linear-gradient(180deg,#fdfdfd,#e9e9e9)"></div>
<span class="ui" style="left:352px;top:456px;color:#3c3c3c;-webkit-text-stroke:0;letter-spacing:.18px">Command Window</span>
<div style="left:347px;top:473px;width:18px;height:267px;background:#f0f0f0"></div>
<span class="mono" style="left:370px;top:499px;color:#2a2a2a">A =

   NaN   NaN
   NaN   NaN
   NaN   NaN
   NaN   NaN

&gt;&gt;</span>
<span style="left:351.500px;top:623px;font-family:'Liberation Serif',serif;font-style:italic;font-size:14.500px;line-height:16px;color:#111;letter-spacing:-.3px;-webkit-text-stroke:.4px #111">fx</span><div class="tri" style="left:358px;top:636px;border-width:3px 3px 0 3px"></div>

<svg style="left:1340px;top:455px" width="24" height="18" viewBox="1340 455 24 18"><circle cx="1352.400" cy="463" r="5.600" fill="#fff" stroke="#6a6a6a" stroke-width="1.200"/><path d="M1349.200 461.300 H1355.600 L1352.400 465.300 Z" fill="#555"/></svg>
<!-- ===== STATUS BAR ===== -->
<div id="status" style="left:0;top:744px;width:1366px;height:24px;background:#f0f0f0"></div>

<div style="left:5px;top:749px;width:2px;height:13px;background:linear-gradient(180deg,#9a9a9a,#d8d8d8)"></div><div style="left:9px;top:749px;width:2px;height:13px;background:linear-gradient(180deg,#9a9a9a,#d8d8d8)"></div><div style="left:13px;top:749px;width:2px;height:13px;background:linear-gradient(180deg,#9a9a9a,#d8d8d8)"></div><div style="left:17px;top:749px;width:2px;height:13px;background:linear-gradient(180deg,#9a9a9a,#d8d8d8)"></div>
<div style="left:30px;top:745px;width:1px;height:21px;background:#8a8a8a"></div>
<div style="left:1001px;top:747px;width:243px;height:20px;border:1px solid #b4b4b4;border-right-color:#fff;border-bottom-color:#fff"></div>
<div style="left:1244px;top:747px;width:120px;height:20px;border:1px solid #b4b4b4;border-right-color:#fff;border-bottom-color:#fff"></div>
<span class="ui" style="left:1006px;top:749px">script</span>
<span class="ui" style="left:1249px;top:749px">Ln</span><span class="ui" style="left:1274px;top:749px">6</span>
<span class="ui" style="left:1308px;top:749px">Col</span><span class="ui" style="left:1337px;top:749px">12</span>
<div class="utri" style="left:21px;top:754px;border-bottom-color:#222;border-width:0 3px 4px 3px"></div>
<div style="left:0;top:766px;width:1366px;height:2px;background:#2c2c2c"></div>
</div>
</body>
</html>
